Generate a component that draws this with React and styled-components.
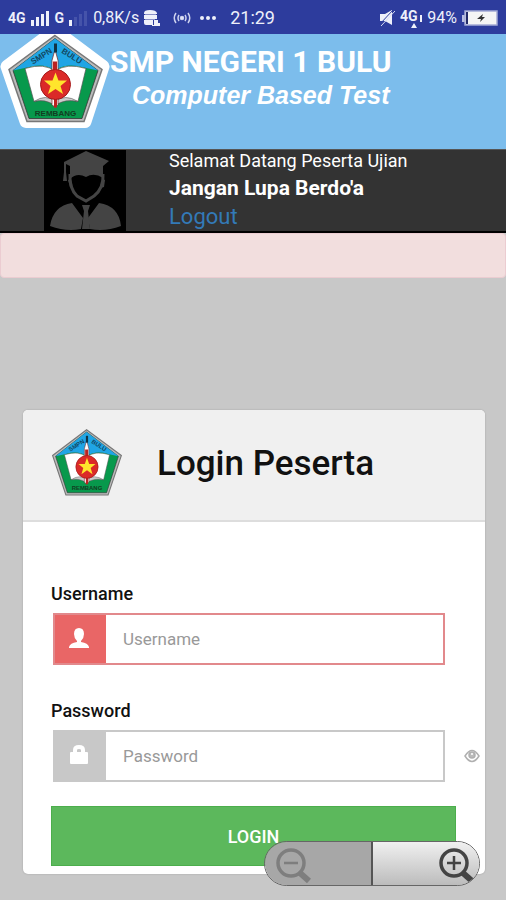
import { useState } from 'react';
import styled, { createGlobalStyle } from 'styled-components';

const GlobalStyle = createGlobalStyle`
  * {
    box-sizing: border-box;
  }

  body {
    margin: 0;
    background-color: #c8c8c8;
    font-family: Roboto, 'Liberation Sans', sans-serif;
    color: #111;
  }
`;

const Page = styled.div`
  min-height: 100vh;
  padding-bottom: 26px;
`;

const StatusBar = styled.div`
  display: flex;
  align-items: center;
  justify-content: space-between;
  height: 34px;
  padding: 2px 8px 0;
  background-color: #2d3c9d;
  color: #eef0fa;
  font-size: 16px;
  line-height: 20px;
`;

const StatusGroup = styled.div`
  display: flex;
  align-items: center;
  gap: ${props => props.gap}px;
`;

const NetworkType = styled.span`
  font-size: 14px;
  font-weight: 700;
`;

const Clock = styled.span`
  font-size: 18px;
`;

const Battery = styled.span`
  font-size: 16px;
`;

const Banner = styled.header`
  display: flex;
  align-items: flex-start;
  height: 115px;
  background-color: #7cbdec;
  color: #fff;
`;

const BannerText = styled.div`
  padding-top: 8px;
`;

const SchoolName = styled.h1`
  margin: 0;
  font-size: 30px;
  font-weight: 700;
  line-height: 40px;
  white-space: nowrap;
`;

const Tagline = styled.p`
  margin: 0;
  padding-left: 22px;
  font-family: 'Liberation Sans', Arial, sans-serif;
  font-size: 25px;
  font-style: italic;
  font-weight: 700;
  line-height: 26px;
  white-space: nowrap;
`;

const UserBar = styled.section`
  display: flex;
  gap: 43px;
  height: 84px;
  padding-left: 44px;
  border-top: 1px solid #555;
  border-bottom: 2px solid #000;
  background-color: #333;
  color: #fff;
`;

const Greeting = styled.div`
  font-size: 18px;
  line-height: 22px;
`;

const Motto = styled.div`
  font-size: 21px;
  font-weight: 700;
  line-height: 32px;
`;

const LogoutLink = styled.a`
  display: block;
  color: #337ab7;
  font-size: 22px;
  line-height: 26px;
  text-decoration: none;
`;

const Alert = styled.div`
  height: 45px;
  border: 1px solid #ebccd1;
  border-radius: 4px;
  background-color: #f2dede;
`;

const Card = styled.main`
  margin: 132px 21px 0 23px;
  border-radius: 5px;
  background-color: #fff;
  box-shadow: 0 0 2px rgba(0, 0, 0, 0.2);
`;

const CardHeader = styled.div`
  display: flex;
  align-items: center;
  gap: 34px;
  height: 112px;
  padding: 0 28px 2px;
  border-bottom: 2px solid #ddd;
  border-radius: 5px 5px 0 0;
  background-color: #f0f0f0;
`;

const CardTitle = styled.h2`
  margin: 0;
  font-size: 35px;
  font-weight: 500;
  line-height: 40px;
`;

const Form = styled.form`
  padding: 60px 5px 8px 28px;
`;

const Field = styled.div`
  display: grid;
  grid-template-columns: 1fr 16px;
  column-gap: 19px;
  row-gap: 7px;
  align-items: center;
  margin-bottom: ${props => props.last ? '24px' : '34px'};
`;

const Label = styled.label`
  grid-column: 1 / -1;
  font-size: 18px;
  font-weight: 500;
  line-height: 24px;
`;

const InputGroup = styled.div`
  display: flex;
  height: 52px;
  margin-left: 2px;
  border: 2px solid ${props => props.invalid ? '#e2898c' : '#c8c8c8'};
`;

const Addon = styled.span`
  display: flex;
  align-items: center;
  justify-content: center;
  width: 51px;
  padding: 0 4px 3px 0;
  background-color: ${props => props.invalid ? '#e96666' : '#c8c8c8'};
`;

const Input = styled.input`
  flex: 1;
  min-width: 0;
  padding: 0 17px;
  border: 0;
  outline: none;
  background-color: #fff;
  color: #333;
  font-family: inherit;
  font-size: 17px;

  &::placeholder {
    color: #999;
    opacity: 1;
  }
`;

const EyeButton = styled.button`
  display: flex;
  padding: 0;
  border: 0;
  background: none;
  cursor: pointer;
`;

const LoginButton = styled.button`
  display: block;
  width: calc(100% - 24px);
  height: 60px;
  border: 1px solid #4cae4c;
  background-color: #5cb85c;
  color: #fff;
  font-family: inherit;
  font-size: 18px;
  font-weight: 500;
  cursor: pointer;
`;

const ZoomControls = styled.div`
  position: fixed;
  right: 26px;
  bottom: 14px;
  display: flex;
  width: 216px;
  height: 45px;
  overflow: hidden;
  border: 1px solid #666;
  border-radius: 23px;
`;

const ZoomButton = styled.button`
  display: flex;
  flex: 1;
  align-items: center;
  justify-content: ${props => props.zoomOut ? 'flex-start' : 'flex-end'};
  padding: 4px 1px 0 8px;
  border: 0;
  border-right: ${props => props.zoomOut ? '2px solid #555' : '0'};
  background: ${props => props.zoomOut ? '#a7a7a7' : 'linear-gradient(#f0f0f0, #bcbcbc)'};
`;

const SchoolLogo = ({ size, outlined }) => (
  <svg
    width={size}
    height={outlined ? Math.round(size * 0.86) : size}
    viewBox={outlined ? '0 3 110 94' : '18 0 74 74'}
    role="img"
    aria-label="SMPN 1 Bulu Rembang"
  >
    {outlined && (
      <path d="M55-1 103 35 85 90H26L7 35Z" fill="#fff" stroke="#fff" strokeWidth="13" strokeLinejoin="round" />
    )}
    <g transform={outlined ? 'translate(0 3)' : 'translate(12.8 1) scale(.76 .78)'}>
      <path d="M55 1 102 35 84 87H27L9 35Z" fill="#bbb" stroke="#777" strokeWidth="1.5" />
      <path d="M55 4 98 36 82 84H29L13 36Z" fill="#07994c" stroke="#333" strokeWidth=".8" />
      <path d="M55 4 98 36 84 33Q66 28 55 36Q44 28 27 33L13 36Z" fill="#20a5e5" />
      <path d="M25 34Q45 28 55 37Q66 28 86 34L78 67Q65 63 55 71Q45 63 34 67Z" fill="#fff" stroke="#555" strokeWidth=".7" />
      <path d="M34 67Q46 59 55 67Q65 59 78 67Q65 64 55 71Q45 64 34 67Z" fill="#ccc" stroke="#555" strokeWidth=".6" />
      <path d="M55 15 58 26V70L55 73 52 70V26Z" fill="#fff" stroke="#722" strokeWidth=".7" />
      <path d="M53 27h4v9h-4ZM54 63h3v10h-3Z" fill="#b22" />
      <path d="M54 9h3v9h-3Z" fill="#134" />
      <circle cx="55.500" cy="50" r="15" fill="#db2a28" stroke="#a51b1b" />
      <path d="m55.500 38 3 8h8.500l-6.500 5.500 2.500 8-7.500-5-7.500 5 2.500-8-6.500-5.500h8.500Z" fill="#ffe52c" />
      <g fill="#124761" fontFamily="Liberation Sans" fontSize="8" fontWeight="700">
        <text transform="translate(33 30) rotate(-32)">SMPN</text>
        <text transform="translate(61 18) rotate(32)">BULU</text>
      </g>
      <text x="55.500" y="81" fill="#123d22" textAnchor="middle" fontFamily="Liberation Sans" fontSize="8" fontWeight="700">REMBANG</text>
    </g>
  </svg>
);

const SignalIcon = ({ strength }) => (
  <svg width="21" height="16" viewBox="0 0 21 16" aria-hidden="true">
    {[6, 9, 12, 15].map((height, i) => (
      <rect key={height} x={i * 5 + 1} y={16 - height} width="3" height={height} fill={i < strength ? '#eef0fa' : '#4553aa'} />
    ))}
  </svg>
);

const StorageIcon = () => (
  <svg width="17" height="16" viewBox="0 0 17 16" fill="#eef0fa" aria-hidden="true">
    <path d="M1 3Q1 0 7 0T14 3V4H1ZM1 5H14V9H1ZM1 10H10V15H3Q1 15 1 13ZM11 10H15V13H17V16H9V15H11Z" />
    <path d="M2 4.500H13M2 9.500H12" stroke="#8990c8" />
  </svg>
);

const HotspotIcon = () => (
  <svg width="18" height="12" viewBox="0 0 18 12" fill="none" stroke="#cdd2ef" strokeWidth="1.500" aria-hidden="true">
    <circle cx="9" cy="6" r="1.500" fill="#fff" />
    <path d="M6 3Q4 6 6 9M12 3Q14 6 12 9M3 1Q-.5 6 3 11M15 1Q18.500 6 15 11" />
  </svg>
);

const DotsIcon = () => (
  <svg width="18" height="6" viewBox="0 0 18 6" fill="#eef0fa" aria-hidden="true">
    <circle cx="3" cy="3" r="2" />
    <circle cx="9" cy="3" r="2" />
    <circle cx="15" cy="3" r="2" />
  </svg>
);

const MuteIcon = () => (
  <svg width="16" height="18" viewBox="0 0 16 18" aria-hidden="true">
    <path d="M1 5H6L13 1V16L6 12H1Z" fill="#eef0fa" />
    <path d="M1 15 14 1" stroke="#2d3c9d" />
    <path d="M2 17 16 2" stroke="#d9dcf2" />
  </svg>
);

const DataIcon = () => (
  <svg width="24" height="26" viewBox="0 0 24 26" fill="#eef0fa" aria-hidden="true">
    <text x="1" y="16" fontFamily="Roboto" fontSize="14" fontWeight="700">4G</text>
    <path d="M21 10h2v7h-2ZM15 18l3 5h-6Z" />
  </svg>
);

const BatteryIcon = () => (
  <svg width="37" height="16" viewBox="0 0 37 16" aria-hidden="true">
    <path d="M1 5h3v7H1Z" fill="#b9bee2" />
    <rect x="4" y="1" width="32" height="14" fill="#f5f5f5" stroke="#a4aad5" strokeWidth="1.500" />
    <path d="M5 2h2v12H5Z" fill="#222a68" />
    <path d="m22 4-6 5h4l-1 3 5-5h-3Z" fill="#333" />
  </svg>
);

const Avatar = () => (
  <svg width="82" height="81" viewBox="0 0 82 81" role="img" aria-label="Peserta">
    <rect width="82" height="81" fill="#000" />
    <g fill="#444">
      <path d="M42 1 65 11 59 16V28Q50 22 42 27Q33 22 26 29V16L22 14V22L23 31H19L20 22V12Z" />
      <path d="M26 24Q25 38 33 46L42 51 50 46Q60 38 59 24" fill="none" stroke="#444" strokeWidth="3" />
      <path d="M24 30 27 29 29 38 26 37ZM61 30 58 29 56 38 60 37Z" />
      <path d="M28 53 39 68 37 79Q22 82 6 76Q9 56 28 53ZM55 53 44 68 46 79Q61 82 77 76Q75 56 55 53Z" />
      <path d="M38 55h8l-2 6 2 18h-8l2-18Z" />
    </g>
  </svg>
);

const UserIcon = () => (
  <svg width="20" height="22" viewBox="0 0 20 22" fill="#fff" aria-hidden="true">
    <path d="M10 1Q15 1 15 7Q15 11 12 14V15Q19 16 20 20V21H0V20Q1 16 8 15V14Q5 11 5 7Q5 1 10 1Z" />
  </svg>
);

const LockIcon = () => (
  <svg width="20" height="22" viewBox="0 0 20 22" aria-hidden="true">
    <path d="M6 9V6Q6 3 10 3T14 6V9" fill="none" stroke="#fff" strokeWidth="4" />
    <rect x="1" y="8" width="18" height="12" rx="1" fill="#fff" />
  </svg>
);

const EyeIcon = () => (
  <svg width="16" height="14" viewBox="0 0 16 14" fill="none" stroke="#b0b0b0" strokeWidth="1.500" aria-hidden="true">
    <path d="M1 7Q8-4 15 7Q8 18 1 7Z" />
    <circle cx="8" cy="6" r="3" fill="#bbb" />
    <path d="M7 5h2" stroke="#fff" />
  </svg>
);

const MagnifierIcon = ({ plus }) => (
  <svg width="42" height="40" viewBox="0 0 42 40" fill="none" stroke={plus ? '#444' : '#7e7e7e'} aria-hidden="true">
    <circle cx="18" cy="17" r="13" strokeWidth="3.500" />
    <path d="M11 17h14" strokeWidth="2.500" />
    {plus && <path d="M18 10v14" strokeWidth="2.500" />}
    <path d="m27 27 9 8" strokeWidth="6" />
  </svg>
);

const App = () => {
  const [username, setUsername] = useState('');
  const [password, setPassword] = useState('');
  const [showPassword, setShowPassword] = useState(false);

  return (
    <>
      <GlobalStyle />
      <Page>
        <StatusBar>
          <StatusGroup gap={13}>
            <StatusGroup gap={4}>
              <NetworkType>4G</NetworkType>
              <SignalIcon strength={4} />
              <NetworkType>G</NetworkType>
              <SignalIcon strength={1} />
              <span>0,8K/s</span>
              <StorageIcon />
            </StatusGroup>
            <StatusGroup gap={8}>
              <HotspotIcon />
              <DotsIcon />
            </StatusGroup>
            <Clock>21:29</Clock>
          </StatusGroup>
          <StatusGroup gap={4}>
            <MuteIcon />
            <DataIcon />
            <Battery>94%</Battery>
            <BatteryIcon />
          </StatusGroup>
        </StatusBar>

        <Banner>
          <SchoolLogo size={110} outlined />
          <BannerText>
            <SchoolName>SMP NEGERI 1 BULU</SchoolName>
            <Tagline>Computer Based Test</Tagline>
          </BannerText>
        </Banner>

        <UserBar>
          <Avatar />
          <div>
            <Greeting>Selamat Datang Peserta Ujian</Greeting>
            <Motto>Jangan Lupa Berdo'a</Motto>
            <LogoutLink href="#logout">Logout</LogoutLink>
          </div>
        </UserBar>
        <Alert />

        <Card>
          <CardHeader>
            <SchoolLogo size={72} />
            <CardTitle>Login Peserta</CardTitle>
          </CardHeader>
          <Form onSubmit={e => e.preventDefault()}>
            <Field>
              <Label htmlFor="username">Username</Label>
              <InputGroup invalid>
                <Addon invalid><UserIcon /></Addon>
                <Input
                  id="username"
                  placeholder="Username"
                  value={username}
                  onChange={e => setUsername(e.target.value)}
                />
              </InputGroup>
            </Field>
            <Field last>
              <Label htmlFor="password">Password</Label>
              <InputGroup>
                <Addon><LockIcon /></Addon>
                <Input
                  id="password"
                  type={showPassword ? 'text' : 'password'}
                  placeholder="Password"
                  value={password}
                  onChange={e => setPassword(e.target.value)}
                />
              </InputGroup>
              <EyeButton type="button" aria-label="Password" onClick={() => setShowPassword(!showPassword)}>
                <EyeIcon />
              </EyeButton>
            </Field>
            <LoginButton type="submit">LOGIN</LoginButton>
          </Form>
        </Card>
      </Page>

      <ZoomControls>
        <ZoomButton zoomOut disabled aria-label="Zoom out"><MagnifierIcon /></ZoomButton>
        <ZoomButton aria-label="Zoom in"><MagnifierIcon plus /></ZoomButton>
      </ZoomControls>
    </>
  );
};

export default App;
